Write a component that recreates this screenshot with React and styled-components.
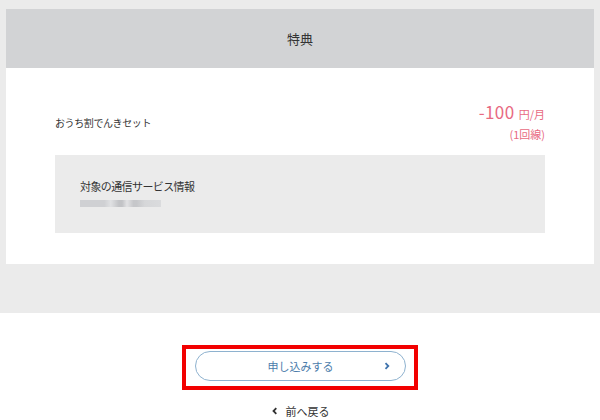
import React from "react"
import styled, { createGlobalStyle } from "styled-components"

const GlobalStyle = createGlobalStyle`
  body {
    margin: 0;
    background: #fff;
    font-family: "Noto Sans CJK JP", "Noto Sans", sans-serif;
    color: #333;
  }
`

function App() {
  return (
    <>
      <GlobalStyle />
      <GrayArea>
        <Panel>
          <PanelHeader>特典</PanelHeader>
          <PanelBody>
            <BenefitRow>
              <BenefitName>おうち割でんきセット</BenefitName>
              <Price>
                <Amount>
                  -100 <Unit>円/月</Unit>
                </Amount>
                <Lines>(1回線)</Lines>
              </Price>
            </BenefitRow>
            <InfoBox>
              <InfoTitle>対象の通信サービス情報</InfoTitle>
              <Blurred />
            </InfoBox>
          </PanelBody>
        </Panel>
      </GrayArea>
      <Actions>
        <Highlight>
          <ApplyButton>
            申し込みする
            <Chevron>
              <svg width="8" height="8" viewBox="0 0 8 8">
                <path d="M2.5 1.2 L5.3 4 L2.5 6.8" fill="none" stroke="#3f73ad" strokeWidth="1.8" />
              </svg>
            </Chevron>
          </ApplyButton>
        </Highlight>
        <BackLink>
          <svg width="8" height="8" viewBox="0 0 8 8">
            <path d="M5.3 1.2 L2.5 4 L5.3 6.8" fill="none" stroke="#333" strokeWidth="1.8" />
          </svg>
          前へ戻る
        </BackLink>
      </Actions>
    </>
  )
}

export default App

const GrayArea = styled.div`
  background: #ebebeb;
  padding: 9px 6px 49px;
`

const Panel = styled.div`
  background: #fff;
`

const PanelHeader = styled.div`
  height: 59px;
  background: #d2d3d5;
  display: flex;
  align-items: center;
  justify-content: center;
  font-size: 13px;
  color: #333;
`

const PanelBody = styled.div`
  padding: 33px 49px 31px;
`

const BenefitRow = styled.div`
  display: flex;
  justify-content: space-between;
  align-items: center;
  padding-bottom: 12px;
`

const BenefitName = styled.div`
  font-size: 10px;
  letter-spacing: -0.4px;
  color: #333;
  margin-top: 1px;
`

const Price = styled.div`
  text-align: right;
  color: #e86a82;
`

const Amount = styled.div`
  font-size: 17px;
  letter-spacing: 0.4px;
  line-height: 22px;
`

const Unit = styled.span`
  font-size: 11px;
  letter-spacing: 0;
`

const Lines = styled.div`
  font-size: 11px;
  line-height: 18px;
`

const InfoBox = styled.div`
  background: #ebebeb;
  height: 78px;
  box-sizing: border-box;
  padding: 24px 25px 0;
`

const InfoTitle = styled.div`
  font-size: 11px;
  letter-spacing: -0.6px;
  line-height: 14px;
  color: #333;
`

const Blurred = styled.div`
  margin-top: 7px;
  width: 81px;
  height: 7px;
  background: linear-gradient(
    90deg,
    #cfd0d3 0 30%,
    #e0e1e3 38%,
    #c2c3c6 48% 52%,
    #e2e2e4 58%,
    #c6c7ca 66% 70%,
    #d6d7d9 80%,
    #dadbdd 100%
  );
  filter: blur(0.6px);
`

const Actions = styled.div`
  display: flex;
  flex-direction: column;
  align-items: center;
  padding-top: 32px;
`

const Highlight = styled.div`
  border: 4px solid #f20000;
  padding: 2px 8px 5px 9px;
`

const ApplyButton = styled.button`
  position: relative;
  width: 211px;
  height: 30px;
  border: 1px solid #8eb2cf;
  border-radius: 15px;
  background: #fff;
  color: #4c7cab;
  font-family: "Noto Sans CJK JP", sans-serif;
  font-size: 11px;
  display: flex;
  align-items: center;
  justify-content: center;
`

const Chevron = styled.span`
  position: absolute;
  right: 14px;
  top: 50%;
  transform: translateY(-50%);
  display: flex;
`

const BackLink = styled.a`
  margin-top: 13px;
  display: flex;
  align-items: center;
  gap: 7px;
  font-size: 11px;
  color: #333;
  text-decoration: none;
`
